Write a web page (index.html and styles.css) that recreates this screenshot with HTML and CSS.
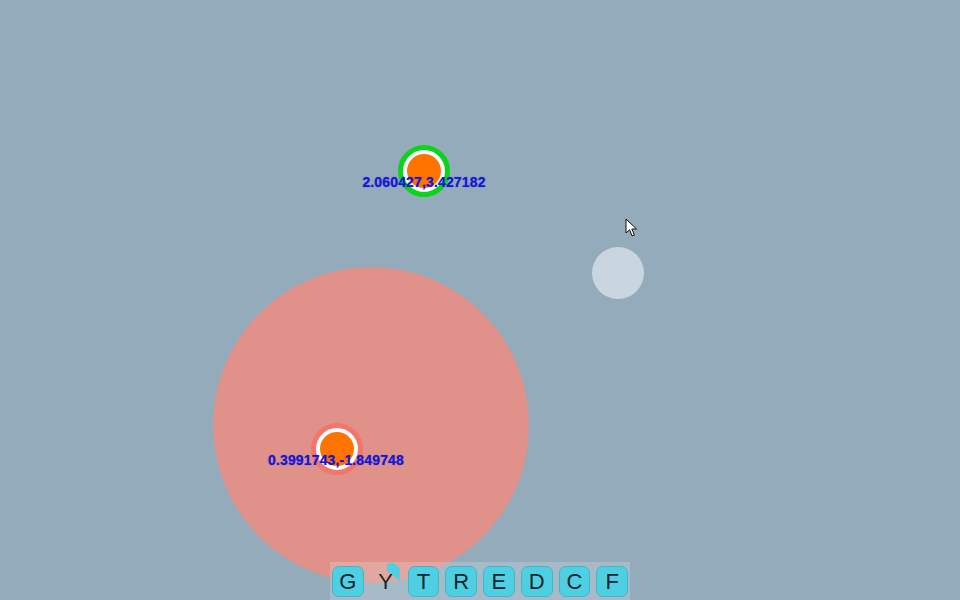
FILE: index.html
```html
<!DOCTYPE html>
<html>
<head>
<meta charset="utf-8">
<link rel="stylesheet" href="styles.css">
</head>
<body>
<div class="stage">
  <div class="zone" style="left:213px;top:267px;width:316px;height:316px"></div>

  <div class="node node-green" style="left:398px;top:145px"><div class="core"></div></div>
  <div class="label" style="left:424px;top:182px">2.060427,3.427182</div>

  <div class="node node-red" style="left:311px;top:423px"><div class="core"></div></div>
  <div class="label" style="left:336px;top:460px">0.3991743,-1.849748</div>

  <div class="ghost" style="left:592px;top:247px"></div>

  <svg class="cursor" style="left:626px;top:219px" width="14" height="20" viewBox="0 0 14 20">
    <path d="M1 1 L1 15 L4.5 11.8 L7.2 18 L9.4 17 L6.8 11 L11.5 11 Z" fill="#fff" stroke="#111" stroke-width="1" stroke-linejoin="round"/>
  </svg>

  <div class="toolbar">
    <div class="key">G</div>
    <div class="key key-y"><span class="shard"></span><span class="char">Y</span></div>
    <div class="key">T</div>
    <div class="key">R</div>
    <div class="key">E</div>
    <div class="key">D</div>
    <div class="key">C</div>
    <div class="key">F</div>
  </div>
</div>
</body>
</html>
```

FILE: styles.css
```css
html, body {
  margin: 0;
  padding: 0;
}
body {
  background: #93abbb;
  font-family: "Liberation Sans", Arial, sans-serif;
  overflow: hidden;
}
.stage {
  position: relative;
  width: 960px;
  height: 600px;
  overflow: hidden;
  background: #93abbb;
}
.zone {
  position: absolute;
  border-radius: 50%;
  background: #e0928a;
}
.node {
  position: absolute;
  width: 52px;
  height: 52px;
  border-radius: 50%;
  box-sizing: border-box;
  display: flex;
  align-items: center;
  justify-content: center;
}
.node-green {
  background: #ffffff;
  border: 5px solid #0cd41a;
}
.node-red {
  background: #ffffff;
  border: 5px solid #f2766a;
}
.core {
  width: 34px;
  height: 34px;
  border-radius: 50%;
  background: #ff7300;
}
.label {
  position: absolute;
  transform: translate(-50%, -50%);
  color: #1616d8;
  font-weight: bold;
  font-size: 14px;
  line-height: 16px;
  white-space: nowrap;
  letter-spacing: 0.15px;
  text-shadow: 0 0 1px rgba(20, 20, 200, 0.6);
}
.ghost {
  position: absolute;
  width: 52px;
  height: 52px;
  border-radius: 50%;
  background: #c9d6df;
}
.cursor {
  position: absolute;
  margin-left: -1px;
  margin-top: -1px;
}
.toolbar {
  position: absolute;
  left: 330px;
  bottom: 0;
  width: 300px;
  height: 38px;
  box-sizing: border-box;
  padding: 4px 2px 3px 2px;
  display: flex;
  gap: 6px;
  background: rgba(235, 240, 244, 0.22);
}
.key {
  position: relative;
  width: 32px;
  height: 31px;
  box-sizing: border-box;
  border-radius: 7px;
  background: #4fcfe2;
  border: 1px solid #3fb6ca;
  color: #17252d;
  font-size: 22px;
  line-height: 29px;
  text-align: center;
}
.key-y {
  background: transparent;
  border-color: transparent;
}
.key-y .char {
  position: relative;
}
.shard {
  position: absolute;
  left: 16px;
  top: -4px;
  width: 13px;
  height: 18px;
  background: #4fcfe2;
  border-top-left-radius: 4px;
  clip-path: polygon(0 0, 55% 0, 100% 28%, 100% 100%, 0 42%);
}
```
